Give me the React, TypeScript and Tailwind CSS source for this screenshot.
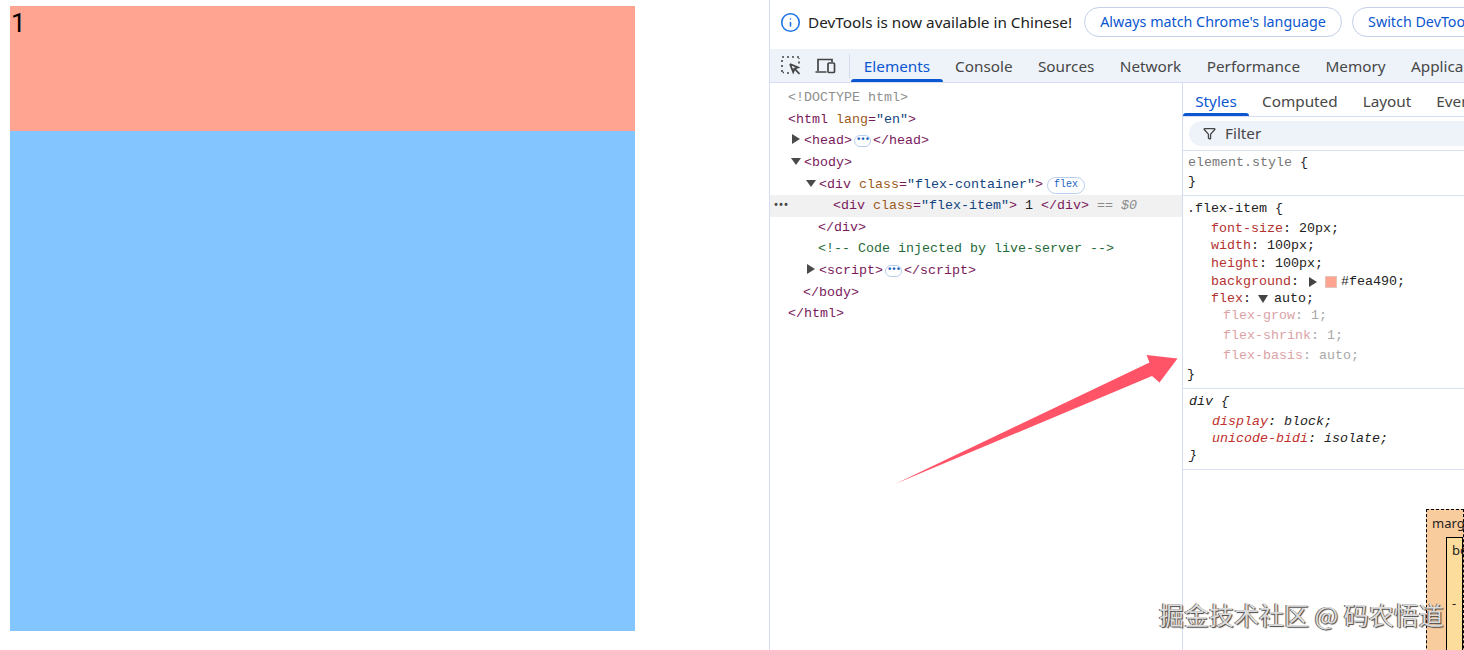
import { Info, Filter } from "lucide-react";

const TAG = "text-[#7a1a5c]";
const ATTR = "text-[#9a5a1c]";
const VAL = "text-[#12457f]";
const PROP = "text-[#b3322f]";
const DIM = "text-[#dba3a6]";
const DIM_VAL = "text-[#a8a8a8]";

const TABS = ["Console", "Sources", "Network", "Performance", "Memory", "Applica"];
const SIDE_TABS = ["Computed", "Layout", "Ever"];

function Dots() {
    return (
        <span className="inline-flex items-center justify-center w-[17px] h-[12px] mx-[2px] rounded-full border border-[#b9cdee] bg-white text-[#1a5fc0] text-[9px] tracking-[-1px] leading-none align-middle font-bold">
            •••
        </span>
    );
}

function Caret({ open }: { open?: boolean }) {
    return (
        <svg width="10" height="10" viewBox="0 0 10 10" className="absolute -left-[13px] top-[4px]">
            <path d={open ? "M0 2h10L5 9z" : "M1 0v10l8-5z"} fill="#4a4a4a" />
        </svg>
    );
}

function Line({ pad, children, selected }: { pad: string; children: React.ReactNode; selected?: boolean }) {
    return (
        <div className={`h-[21.65px] leading-[21.65px] whitespace-nowrap relative ${selected ? "bg-[#f1f1f1]" : ""}`}>
            {selected && <span className="absolute left-[3px] top-0 text-[10px] tracking-[-1px] font-bold text-[#444]">•••</span>}
            <span className={`relative inline-block ${pad}`}>{children}</span>
        </div>
    );
}

function ElementsTree() {
    return (
        <div className="w-[413px] pt-[4px] border-r border-[#d6dcf3] text-[13.33px] text-[#222]">
            <Line pad="pl-[18px]"><span className="text-[#8f8f8f]">{"<!DOCTYPE html>"}</span></Line>
            <Line pad="pl-[18px]">
                <span className={TAG}>{"<html "}</span><span className={ATTR}>lang</span><span className={TAG}>=</span><span className={VAL}>"en"</span><span className={TAG}>{">"}</span>
            </Line>
            <Line pad="ml-[34px]"><Caret /><span className={TAG}>{"<head>"}</span><Dots /><span className={TAG}>{"</head>"}</span></Line>
            <Line pad="ml-[34px]"><Caret open /><span className={TAG}>{"<body>"}</span></Line>
            <Line pad="ml-[49px]">
                <Caret open />
                <span className={TAG}>{"<div "}</span><span className={ATTR}>class</span><span className={TAG}>=</span><span className={VAL}>"flex-container"</span><span className={TAG}>{">"}</span>
                <span className="inline-flex items-center justify-center ml-[4px] w-[38px] h-[17px] mt-[2px] rounded-full border border-[#b9cdee] text-[#1a5fc0] text-[10px] leading-none align-middle">flex</span>
            </Line>
            <Line pad="pl-[63px]" selected>
                <span className={TAG}>{"<div "}</span><span className={ATTR}>class</span><span className={TAG}>=</span><span className={VAL}>"flex-item"</span><span className={TAG}>{">"}</span>
                {" 1 "}<span className={TAG}>{"</div>"}</span><span className="text-[#8a8a8a] italic">{" == $0"}</span>
            </Line>
            <Line pad="pl-[48px]"><span className={TAG}>{"</div>"}</span></Line>
            <Line pad="pl-[48px]"><span className="text-[#1f6b3a]">{"<!-- Code injected by live-server -->"}</span></Line>
            <Line pad="ml-[49px]"><Caret /><span className={TAG}>{"<script>"}</span><Dots /><span className={TAG}>{"</script>"}</span></Line>
            <Line pad="pl-[33px]"><span className={TAG}>{"</body>"}</span></Line>
            <Line pad="pl-[18px]"><span className={TAG}>{"</html>"}</span></Line>
        </div>
    );
}

function StylesPane() {
    return (
        <div className="flex-1 min-w-0 text-[13.33px] text-[#222] whitespace-nowrap">
            <div className="h-[34px] flex border-b border-[#d6dcf3] font-['Noto_Sans'] text-[15.3px] text-[#474747]">
                <div className="relative w-[66px] shrink-0 text-center leading-[36px] text-[#0b57d0]">
                    Styles
                    <div className="absolute left-0 right-0 bottom-0 h-[3px] rounded-t-[3px] bg-[#0b57d0]" />
                </div>
                {SIDE_TABS.map((t) => (
                    <div key={t} className="shrink-0 pl-[13px] pr-[12px] leading-[36px]">{t}</div>
                ))}
            </div>
            <div className="h-[34px] pt-[4px] pl-[6px] border-b border-[#d9dff2]">
                <div className="h-[25px] rounded-l-full bg-[#eef3fa] flex items-center pl-[14px] gap-[9px] font-['Noto_Sans'] text-[15.3px] text-[#474747]">
                    <Filter size={13} strokeWidth={2.4} className="text-[#444]" />
                    Filter
                </div>
            </div>
            <div className="h-[45px] pl-[5px] pt-[2px] border-b border-[#d9dff2]">
                <div className="h-[19px] leading-[19px]"><span className="text-[#777]">element.style</span> {"{"}</div>
                <div className="h-[19px] leading-[19px]">{"}"}</div>
            </div>
            <div className="h-[193px] pl-[4px] pt-[3px] border-b border-[#d9dff2]">
                <div className="h-[20px] leading-[19px]">{".flex-item {"}</div>
                <div className="pl-[24px]">
                    <div className="h-[18px] leading-[19px]"><span className={PROP}>font-size</span>: 20px;</div>
                    <div className="h-[18px] leading-[17px]"><span className={PROP}>width</span>: 100px;</div>
                    <div className="h-[18px] leading-[18px]"><span className={PROP}>height</span>: 100px;</div>
                    <div className="h-[17px] leading-[18px] flex items-center">
                        <span className={PROP}>background</span>:
                        <svg width="8" height="10" viewBox="0 0 8 10" className="ml-[10px] mr-[8px]"><path d="M0 0v10l8-5z" fill="#444" /></svg>
                        <span className="w-[12px] h-[12px] mr-[4px] bg-[#fea490] border border-[#e3c5bd]" />
                        #fea490;
                    </div>
                    <div className="h-[17px] leading-[17px] flex items-center">
                        <span className={PROP}>flex</span>:
                        <svg width="10" height="8" viewBox="0 0 10 8" className="ml-[7px] mr-[6px]"><path d="M0 0h10L5 8z" fill="#444" /></svg>
                        auto;
                    </div>
                    <div className="pl-[12px] h-[19px] leading-[18px]"><span className={DIM}>flex-grow</span><span className={DIM_VAL}>: 1;</span></div>
                    <div className="pl-[12px] h-[20px] leading-[20px]"><span className={DIM}>flex-shrink</span><span className={DIM_VAL}>: 1;</span></div>
                    <div className="pl-[12px] h-[19px] leading-[20px]"><span className={DIM}>flex-basis</span><span className={DIM_VAL}>: auto;</span></div>
                </div>
                <div className="h-[19px] leading-[19px]">{"}"}</div>
            </div>
            <div className="h-[81px] pl-[6px] pt-[4px] border-b border-[#d9dff2] italic">
                <div className="h-[19px] leading-[18px]">{"div {"}</div>
                <div className="pl-[23px]">
                    <div className="h-[18px] leading-[19px]"><span className="text-[#c0302d]">display</span>: block;</div>
                    <div className="h-[17px] leading-[17px]"><span className="text-[#c0302d]">unicode-bidi</span>: isolate;</div>
                </div>
                <div className="h-[17px] leading-[17px]">{"}"}</div>
            </div>
            {/* box model, cut off by the window */}
            <div className="ml-[243px] mt-[39px] h-[200px] border border-dashed border-black bg-[#f9cc9d] pt-[4px] pl-[5px] font-['Noto_Sans'] text-[13px] text-[#222]">
                marg
                <div className="ml-[14px] mt-[3px] h-[150px] border border-black bg-[#fddd9b] pt-[3px] pl-[5px]">
                    bo
                    <div className="mt-[34px]">-</div>
                </div>
            </div>
        </div>
    );
}

export default function App() {
    return (
        <div className="relative w-[1464px] h-[650px] overflow-hidden bg-white flex font-['Liberation_Mono',monospace]">
            <div className="w-[770px] shrink-0 pl-[10px] pt-[6px] border-r border-[#d6dcf3]">
                <div className="w-[625px] h-[125px] pl-[1px] bg-[#fea490] font-['Roboto',sans-serif] text-[26px] leading-[34px] text-black">1</div>
                <div className="w-[625px] h-[500px] bg-[#82c5ff]" />
            </div>

            <div className="flex-1 min-w-0 flex flex-col">
                <div className="h-[49px] flex items-center pl-[10px] pb-[5px] font-['Noto_Sans',sans-serif] text-[15.3px] whitespace-nowrap">
                    <Info size={21} strokeWidth={1.8} className="text-[#1a73e8] shrink-0" />
                    <span className="ml-[7px] text-[#222]">DevTools is now available in Chinese!</span>
                    <span className="ml-[12px] w-[258px] h-[30px] shrink-0 rounded-full border border-[#c3d0e8] text-[14.3px] text-[#0b57d0] flex items-center justify-center">Always match Chrome's language</span>
                    <span className="ml-[10px] h-[30px] shrink-0 pl-[15px] pr-[20px] rounded-full border border-[#c3d0e8] text-[14.3px] text-[#0b57d0] flex items-center">Switch DevTools to Chinese</span>
                </div>

                <div className="h-[34px] bg-[#eef3fa] border-b border-[#d6dcf3] flex items-stretch font-['Noto_Sans',sans-serif] text-[15.3px] text-[#474747] whitespace-nowrap">
                    <div className="w-[79px] shrink-0 flex items-center pl-[11px] gap-[14px]">
                        <svg width="20" height="20" viewBox="0 0 20 20" fill="none" stroke="#444" strokeWidth="1.6">
                            <path d="M1 1h2.5M6 1h2.5M11 1h2.5M16 1h2v2M1 4v2.5M1 9v2.5M1 14v2.5h2M6 17h2" strokeDasharray="2 1.2" />
                            <path d="M18 5.5v2" />
                            <path d="M9 8l8 3.4-3.4 1.2L18.5 18M9 8l3.2 8 1.4-3.4" strokeWidth="1.8" />
                        </svg>
                        <svg width="21" height="18" viewBox="0 0 21 18" fill="none" stroke="#444" strokeWidth="1.7">
                            <path d="M3 14V2.5h14V5M0.5 15h11" />
                            <rect x="13" y="6" width="6.5" height="9.5" rx="1" />
                        </svg>
                    </div>
                    <div className="w-[2px] shrink-0 flex items-center">
                        <div className="w-[1px] h-[24px] bg-[#d6dcf3]" />
                    </div>
                    <div className="relative w-[92px] shrink-0 text-center leading-[35px] text-[#0b57d0]">
                        Elements
                        <div className="absolute left-0 right-0 bottom-0 h-[3px] rounded-t-[3px] bg-[#0b57d0]" />
                    </div>
                    {TABS.map((t) => (
                        <div key={t} className="pl-[12px] pr-[13.4px] leading-[35px]">{t}</div>
                    ))}
                </div>

                <div className="flex-1 flex min-h-0">
                    <ElementsTree />
                    <StylesPane />
                </div>
            </div>

            {/* annotation arrow drawn over the screenshot */}
            <svg className="absolute left-0 top-0 pointer-events-none" width="1464" height="650">
                <path d="M895 484L1149.5 362.5L1146.5 355L1177.5 358.5L1159.5 382.5L1152 376Z" fill="#ff5468" />
            </svg>

            {/* site watermark */}
            <div className="absolute left-[1159px] top-[598px] font-['Noto_Sans_CJK_SC',sans-serif] text-[25px] leading-[32px] whitespace-nowrap text-[#dcdcdc] [text-shadow:1px_1px_1px_#444,-1px_0_0_#666]">
                掘金技术社区 @ 码农悟道
            </div>
        </div>
    );
}
